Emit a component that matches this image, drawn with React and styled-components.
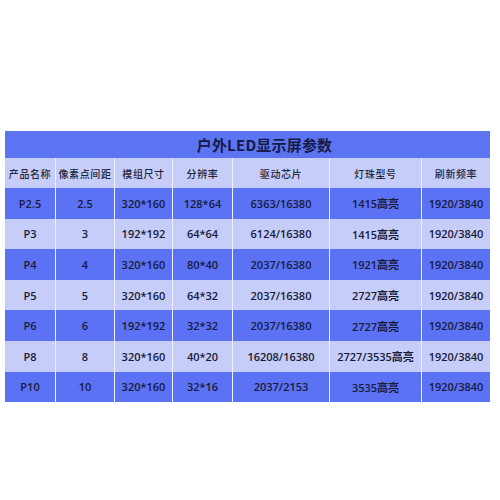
import React from "react";
import styled, { createGlobalStyle } from "styled-components";

const Global = createGlobalStyle`
  html, body { margin: 0; padding: 0; background: #ffffff; }
  body { font-family: "Open Sans", "Noto Sans CJK SC", sans-serif; }
`;

const Page = styled.div`
  width: 500px;
  height: 500px;
  padding: 131px 10px 0 5px;
  box-sizing: border-box;
`;

const Table = styled.div`
  display: grid;
  grid-template-columns: 50px 59px 58px 60px 97px 92px 69px;
  width: 485px;
`;

const Title = styled.div`
  grid-column: 1 / -1;
  height: 27px;
  background: #5b74f2;
  display: flex;
  align-items: center;
  justify-content: center;
  font-family: "Noto Sans CJK SC", "Open Sans", sans-serif;
  font-weight: 700;
  font-size: 15px;
  color: #161a45;
  letter-spacing: 0.2px;
  padding-left: 34px;
  box-sizing: border-box;
`;

const Cell = styled.div`
  height: ${(p) => (p.$head ? "30px" : "30.6px")};
  display: flex;
  align-items: center;
  justify-content: center;
  background: ${(p) => (p.$dark ? "#5b72f4" : "#c6cdf8")};
  border-left: ${(p) => (p.$first ? "none" : "1px solid #eef0ff")};
  font-family: "Open Sans", "Noto Sans CJK SC", sans-serif;
  font-size: ${(p) => (p.$head ? "10px" : "11px")};
  font-weight: ${(p) => (p.$head ? 500 : 600)};
  color: ${(p) => (p.$head ? "#23253a" : "#181a3a")};
  white-space: nowrap;
  box-sizing: border-box;
  letter-spacing: ${(p) => (p.$head ? "0.6px" : "0")};
`;

const headers = ["产品名称", "像素点间距", "模组尺寸", "分辨率", "驱动芯片", "灯珠型号", "刷新频率"];
const rows = [
  ["P2.5", "2.5", "320*160", "128*64", "6363/16380", "1415高亮", "1920/3840"],
  ["P3", "3", "192*192", "64*64", "6124/16380", "1415高亮", "1920/3840"],
  ["P4", "4", "320*160", "80*40", "2037/16380", "1921高亮", "1920/3840"],
  ["P5", "5", "320*160", "64*32", "2037/16380", "2727高亮", "1920/3840"],
  ["P6", "6", "192*192", "32*32", "2037/16380", "2727高亮", "1920/3840"],
  ["P8", "8", "320*160", "40*20", "16208/16380", "2727/3535高亮", "1920/3840"],
  ["P10", "10", "320*160", "32*16", "2037/2153", "3535高亮", "1920/3840"],
];

export default function App() {
  return (
    <>
      <Global />
      <Page>
        <Table>
          <Title>户外LED显示屏参数</Title>
          {headers.map((h, i) => (
            <Cell key={"h" + i} $head $first={i === 0}>
              {h}
            </Cell>
          ))}
          {rows.map((r, ri) =>
            r.map((c, ci) => (
              <Cell key={ri + "-" + ci} $dark={ri % 2 === 0} $first={ci === 0}>
                {c}
              </Cell>
            ))
          )}
        </Table>
      </Page>
    </>
  );
}
